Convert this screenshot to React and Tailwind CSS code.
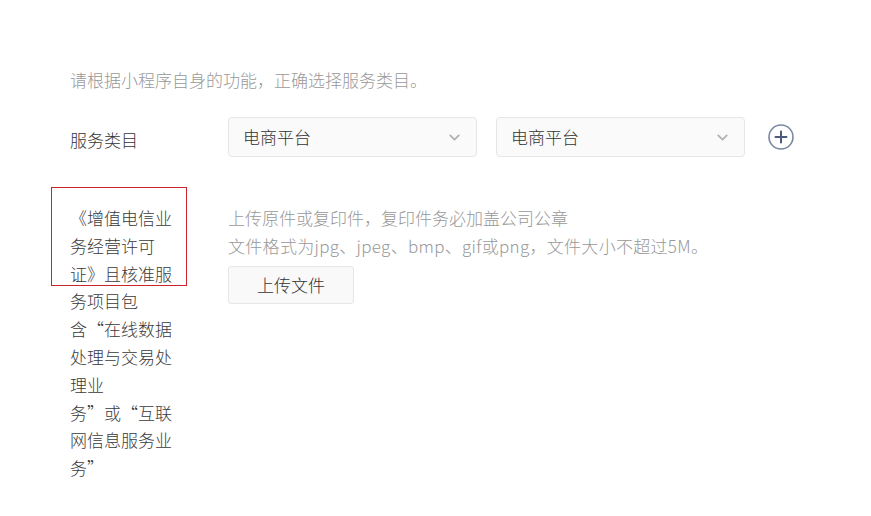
import { ChevronDown } from "lucide-react";

const licenseLines = [
  "《增值电信业",
  "务经营许可",
  "证》且核准服",
  "务项目包",
  "含“在线数据",
  "处理与交易处",
  "理业",
  "务”或“互联",
  "网信息服务业",
  "务”",
];

function Select({ value }) {
  return (
    <div className="flex h-[40px] w-[249px] items-center justify-between rounded-[4px] border border-[#e6e6e6] bg-[#fafafa] pl-[14px] pr-[13px] text-[#333]">
      <span>{value}</span>
      <ChevronDown size={17} strokeWidth={2.6} className="text-[#b3b3b3]" />
    </div>
  );
}

export default function App() {
  return (
    <div className="relative h-[516px] w-[871px] bg-white pl-[70px] pt-[66px] text-[17px] font-light leading-[28px] font-['Noto_Sans_CJK_SC','Noto_Sans',sans-serif]">
      <p className="text-[#999]">请根据小程序自身的功能，正确选择服务类目。</p>

      {/* 服务类目 */}
      <div className="mt-[23px] flex items-center">
        <div className="w-[158px] pt-[6px] text-[#333]">服务类目</div>
        <div className="flex items-center gap-[19px]">
          <Select value="电商平台" />
          <Select value="电商平台" />
        </div>
        <button className="ml-[23px] flex h-[26px] w-[26px] items-center justify-center">
          <svg width="26" height="26" viewBox="0 0 26 26" fill="none">
            <circle cx="13" cy="13" r="12" stroke="#7b87a3" strokeWidth="1.6" />
            <path d="M13 7.5v11M7.5 13h11" stroke="#4c5a7c" strokeWidth="2" strokeLinecap="round" />
          </svg>
        </button>
      </div>

      {/* 许可证 */}
      <div className="mt-[47px] flex">
        <div className="relative w-[110px] leading-[27.8px] text-[#3a3a3a]">
          {licenseLines.map((line, i) => (
            <div key={i} className="whitespace-nowrap">{line}</div>
          ))}
          <div className="absolute left-[-19px] top-[-17px] h-[99px] w-[136px] border border-[#c8252c]" />
        </div>
        <div className="ml-[48px]">
          <div className="text-[#999]">
            <p>上传原件或复印件，复印件务必加盖公司公章</p>
            <p className="tracking-[0.3px]">文件格式为jpg、jpeg、bmp、gif或png，文件大小不超过5M。</p>
          </div>
          <button className="mt-[6px] h-[38px] w-[126px] rounded-[3px] border border-[#e6e6e6] bg-[#f9f9f9] text-[#333]">
            上传文件
          </button>
        </div>
      </div>
    </div>
  );
}
